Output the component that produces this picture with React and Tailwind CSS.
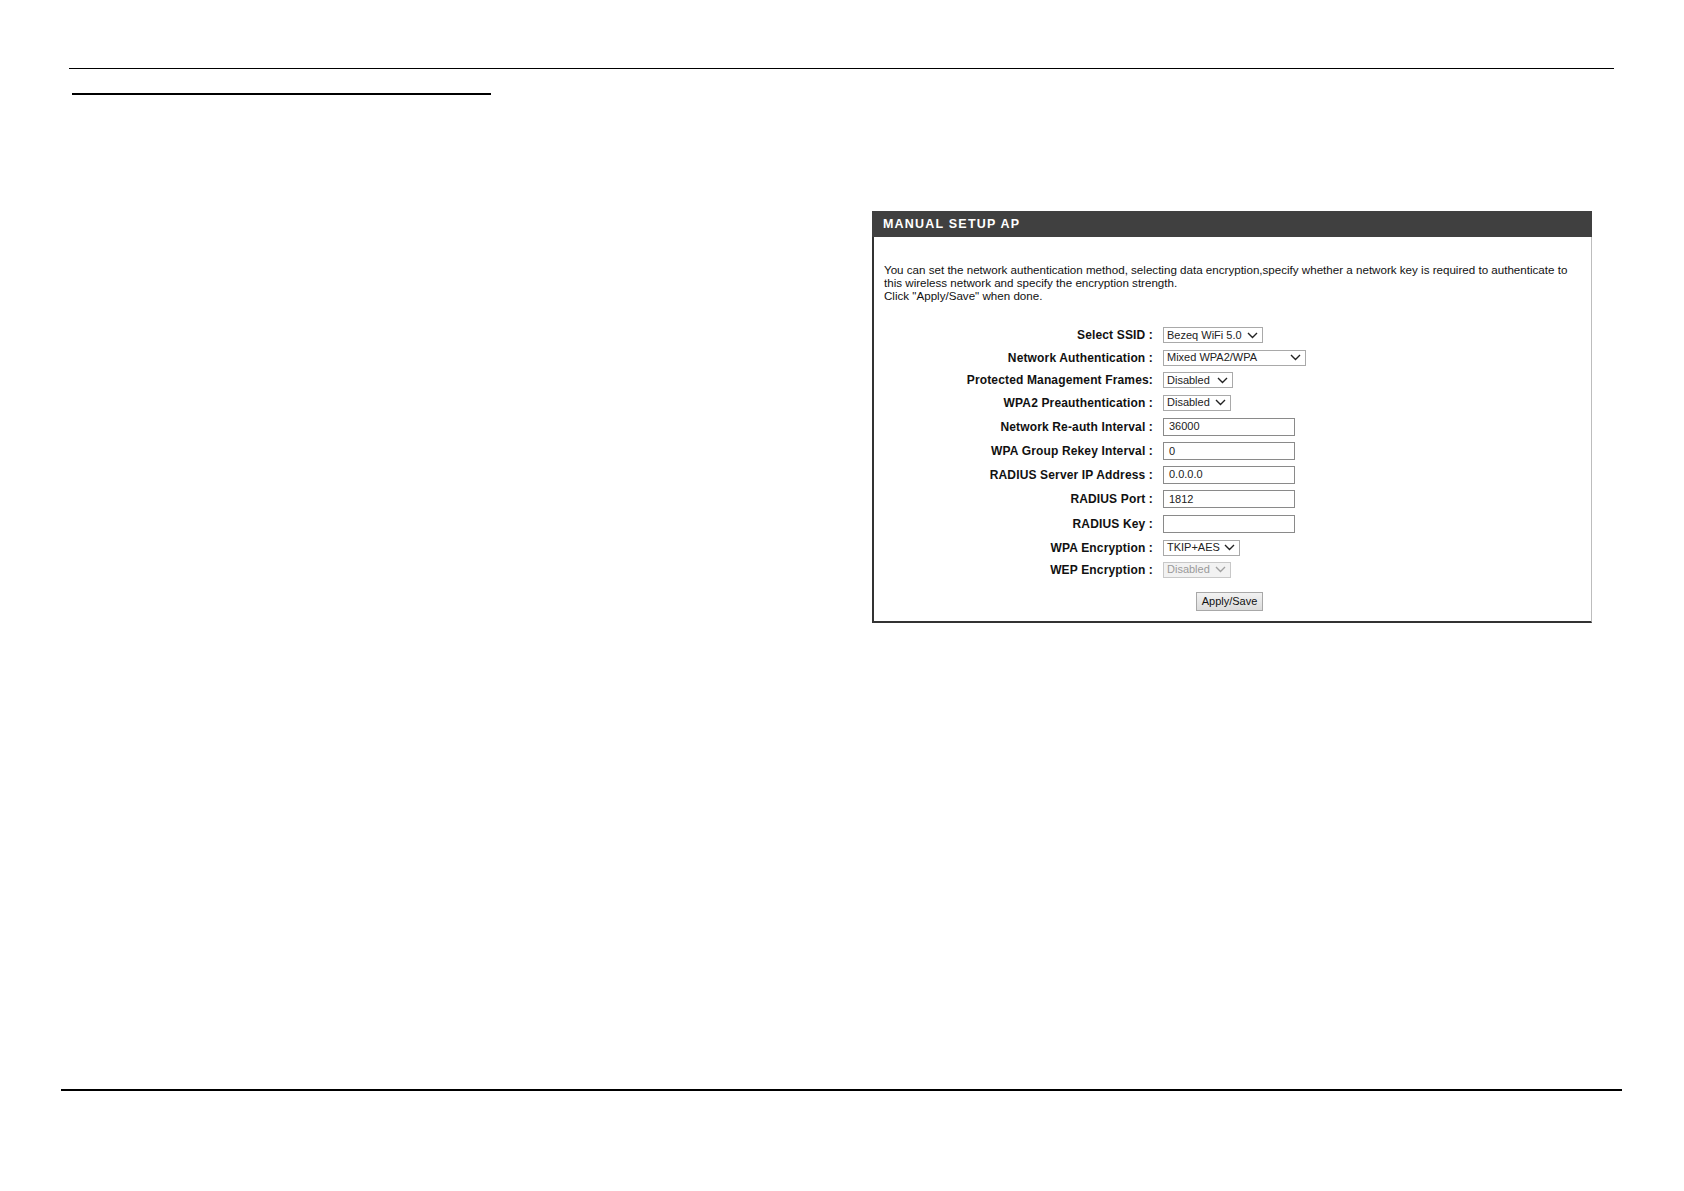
import React from "react";

const font = { fontFamily: '"Liberation Sans", Arial, sans-serif' };

function Chevron({ disabled }) {
  return (
    <svg width="11" height="7" viewBox="0 0 11 7" className="shrink-0">
      <path
        d="M1 1 L5.5 5.5 L10 1"
        fill="none"
        stroke={disabled ? "#a0a0a0" : "#222"}
        strokeWidth="1.4"
      />
    </svg>
  );
}

function Select({ value, width, disabled }) {
  return (
    <div
      className={
        "flex h-[16px] items-center justify-between border pl-[3px] pr-[4px] text-[11px] leading-none " +
        (disabled ? "border-[#c8c8c8] bg-[#f2f2f2] text-[#9a9a9a]" : "border-[#a9a9a9] bg-white text-[#222]")
      }
      style={{ width }}
    >
      <span>{value}</span>
      <Chevron disabled={disabled} />
    </div>
  );
}

function Input({ value }) {
  return (
    <div className="flex h-[18px] w-[132px] items-center border border-[#8a8a8a] bg-white pl-[5px] text-[11px] leading-none text-[#222]">
      {value}
    </div>
  );
}

const rows = [
  { label: "Select SSID :", h: "h-[22px]", el: <Select value="Bezeq WiFi 5.0" width={100} /> },
  { label: "Network Authentication :", h: "h-[23px]", el: <Select value="Mixed WPA2/WPA" width={143} /> },
  { label: "Protected Management Frames:", h: "h-[22px]", el: <Select value="Disabled" width={70} /> },
  { label: "WPA2 Preauthentication :", h: "h-[23px]", el: <Select value="Disabled" width={68} /> },
  { label: "Network Re-auth Interval :", h: "h-[25px]", el: <Input value="36000" /> },
  { label: "WPA Group Rekey Interval :", h: "h-[24px]", el: <Input value="0" /> },
  { label: "RADIUS Server IP Address :", h: "h-[23px]", el: <Input value="0.0.0.0" /> },
  { label: "RADIUS Port :", h: "h-[26px]", el: <Input value="1812" /> },
  { label: "RADIUS Key :", h: "h-[24px]", el: <Input value="" /> },
  { label: "WPA Encryption :", h: "h-[23px]", el: <Select value="TKIP+AES" width={77} /> },
  { label: "WEP Encryption :", h: "h-[21px]", el: <Select value="Disabled" width={68} disabled /> },
];

export default function App() {
  return (
    <div className="relative h-[1191px] w-[1684px] bg-white" style={font}>
      <div className="pt-[68px]">
        <div className="ml-[69px] h-px w-[1545px] bg-black" />
        <div className="ml-[72px] mt-[24px] h-[2px] w-[419px] bg-black" />
      </div>

      <div className="ml-[872px] mt-[116px] w-[720px]">
        <div className="flex h-[26px] items-center bg-[#404040] pl-[11px] text-[12.5px] font-bold tracking-[1.2px] text-white">
          MANUAL SETUP AP
        </div>
        <div className="border-b-2 border-l-2 border-r border-b-[#333] border-l-[#333] border-r-[#bdbdbd] pb-[10px]">
          <p className="pl-[10px] pt-[26px] text-[11.6px] leading-[13px] text-[#111]">
            You can set the network authentication method, selecting data encryption,specify whether a network key is required to authenticate to
            <br />
            this wireless network and specify the encryption strength.
            <br />
            Click "Apply/Save" when done.
          </p>

          <div className="mt-[22px]">
            {rows.map((r) => (
              <div key={r.label} className={"flex items-center " + r.h}>
                <div className="w-[279px] text-right text-[12px] font-bold tracking-[0.15px] text-[#111]">{r.label}</div>
                <div className="ml-[10px]">{r.el}</div>
              </div>
            ))}
          </div>

          <div className="mt-[12px] flex pl-[322px]">
            <button className="h-[19px] w-[67px] border border-[#a8a8a8] bg-gradient-to-b from-[#f2f2f2] to-[#dcdcdc] text-[11px] leading-none text-[#111]">
              Apply/Save
            </button>
          </div>
        </div>
      </div>

      <div className="absolute left-[61px] top-[1089px] h-[2px] w-[1561px] bg-black" />
    </div>
  );
}
